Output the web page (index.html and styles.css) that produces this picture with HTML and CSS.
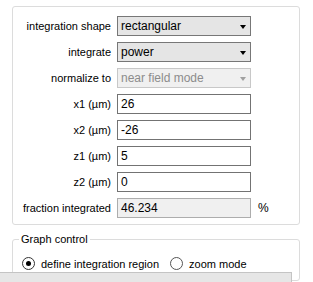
FILE: index.html
```html
<!DOCTYPE html>
<html lang="en">
<head>
    <meta charset="UTF-8">
    <title>Integration</title>
    <link rel="stylesheet" href="styles.css">
</head>
<body>

<div class="group">
    <div class="form">
        <label class="lbl">integration shape</label>
        <div class="combo"><span>rectangular</span><i class="arrow"></i></div>
        <span></span>

        <label class="lbl">integrate</label>
        <div class="combo"><span>power</span><i class="arrow"></i></div>
        <span></span>

        <label class="lbl">normalize to</label>
        <div class="combo disabled"><span>near field mode</span><i class="arrow"></i></div>
        <span></span>

        <label class="lbl">x1 (µm)</label>
        <div class="field">26</div>
        <span></span>

        <label class="lbl">x2 (µm)</label>
        <div class="field">-26</div>
        <span></span>

        <label class="lbl">z1 (µm)</label>
        <div class="field">5</div>
        <span></span>

        <label class="lbl">z2 (µm)</label>
        <div class="field">0</div>
        <span></span>

        <label class="lbl">fraction integrated</label>
        <div class="field readonly">46.234</div>
        <span class="unit">%</span>
    </div>
</div>

<div class="group graph">
    <div class="title">Graph control</div>
    <div class="radios">
        <span class="radio checked"></span>
        <span>define integration region</span>
        <span class="radio"></span>
        <span>zoom mode</span>
    </div>
</div>

<div class="bottombar"></div>

</body>
</html>
```

FILE: styles.css
```css
/* panel */
body {
    margin: 0;
    background-color: #ffffff;
    font-family: "Liberation Sans", Arial, sans-serif;
    font-size: 11px;
    color: #000;
    overflow: hidden;
    height: 282px;
}

.group {
    margin: 6px 13px 0 12px;
    border: 1px solid #dcdcdc;
    border-radius: 3px;
    padding: 9px 0 6px 0;
}

.form {
    display: grid;
    grid-template-columns: 98px 134px auto;
    grid-auto-rows: 20px;
    column-gap: 6px;
    row-gap: 6px;
}

.lbl {
    display: flex;
    align-items: center;
    justify-content: flex-end;
}

.combo {
    display: flex;
    align-items: center;
    justify-content: space-between;
    background-color: #e5e5e5;
    border: 1px solid #777;
    padding: 0 4px 0 3px;
    font-size: 12px;
}

.combo.disabled {
    background-color: #f0f0f0;
    border-color: #c8c8c8;
    color: #8c8c8c;
}

.arrow {
    width: 0;
    height: 0;
    border-left: 3px solid transparent;
    border-right: 3px solid transparent;
    border-top: 4px solid #000;
    margin-top: 1px;
}

.combo.disabled .arrow {
    border-top-color: #a0a0a0;
}

.field {
    display: flex;
    align-items: center;
    border: 1px solid #737373;
    background-color: #fff;
    padding: 0 3px;
    font-size: 12px;
}

.field.readonly {
    background-color: #f0f0f0;
    border-color: #adadad;
}

.unit {
    display: flex;
    align-items: center;
    padding-left: 1px;
    font-size: 12px;
}

/* graph control */
.graph {
    margin-top: 14px;
    padding: 0;
    height: 40px;
}

.title {
    margin: -8px 0 0 6px;
    padding: 0 2px;
    background-color: #fff;
    width: fit-content;
    line-height: 15px;
}

.radios {
    display: flex;
    align-items: center;
    margin: 10px 0 0 9px;
    gap: 6px;
}

.radio {
    width: 11px;
    height: 11px;
    border: 1px solid #333;
    border-radius: 50%;
    background-color: #fff;
    position: relative;
}

.radio + span + .radio {
    margin-left: 5px;
    border-color: #555;
}

.radio.checked::after {
    content: "";
    position: absolute;
    left: 3px;
    top: 3px;
    width: 5px;
    height: 5px;
    border-radius: 50%;
    background-color: #000;
}

.bottombar {
    position: absolute;
    left: 0;
    bottom: 0;
    width: 291px;
    height: 9px;
    background-color: #e6e6e6;
    border-top: 1px solid #c4c4c4;
    border-right: 1px solid #c4c4c4;
}
```
